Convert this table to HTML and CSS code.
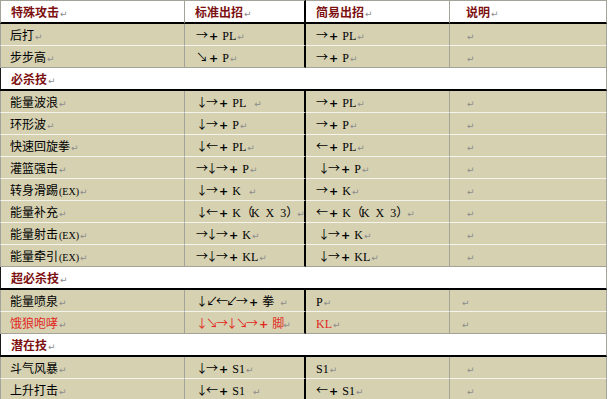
FILE: index.html
```html
<!DOCTYPE html>
<html lang="zh-CN">
<head>
<meta charset="utf-8">
<title>招式表</title>
<link rel="stylesheet" href="styles.css">
</head>
<body>
<table class="moves">
  <colgroup>
    <col class="w1"><col class="w2"><col class="w3"><col class="w4">
  </colgroup>
  <thead>
    <tr class="head">
      <th class="c1">特殊攻击<span class="pm">↵</span></th>
      <th class="c2">标准出招<span class="pm">↵</span></th>
      <th class="c3">简易出招<span class="pm">↵</span></th>
      <th class="c4">说明<span class="pm">↵</span></th>
    </tr>
  </thead>
  <tbody>
    <tr>
      <td class="c1">后打<span class="pm">↵</span></td>
      <td class="c2 mv">→<b>+</b><span class="lat">PL</span><span class="pm">↵</span></td>
      <td class="c3 mv">→<b>+</b><span class="lat">PL</span><span class="pm">↵</span></td>
      <td class="c4"><span class="pm">↵</span></td>
    </tr>
    <tr class="pre">
      <td class="c1">步步高<span class="pm">↵</span></td>
      <td class="c2 mv">↘<b>+</b><span class="lat">P</span><span class="pm">↵</span></td>
      <td class="c3 mv">→<b>+</b><span class="lat">P</span><span class="pm">↵</span></td>
      <td class="c4"><span class="pm">↵</span></td>
    </tr>
    <tr class="section">
      <td colspan="4">必杀技<span class="pm">↵</span></td>
    </tr>
    <tr>
      <td class="c1">能量波浪<span class="pm">↵</span></td>
      <td class="c2 mv">↓→<b>+</b><span class="lat">PL</span><span class="gap"></span><span class="pm">↵</span></td>
      <td class="c3 mv">→<b>+</b><span class="lat">PL</span><span class="pm">↵</span></td>
      <td class="c4"><span class="pm">↵</span></td>
    </tr>
    <tr>
      <td class="c1">环形波<span class="pm">↵</span></td>
      <td class="c2 mv">↓→<b>+</b><span class="lat">P</span><span class="pm">↵</span></td>
      <td class="c3 mv">→<b>+</b><span class="lat">P</span><span class="pm">↵</span></td>
      <td class="c4"><span class="pm">↵</span></td>
    </tr>
    <tr>
      <td class="c1">快速回旋拳<span class="pm">↵</span></td>
      <td class="c2 mv">↓←<b>+</b><span class="lat">PL</span><span class="pm">↵</span></td>
      <td class="c3 mv">←<b>+</b><span class="lat">PL</span><span class="pm">↵</span></td>
      <td class="c4"><span class="pm">↵</span></td>
    </tr>
    <tr>
      <td class="c1">灌篮强击<span class="pm">↵</span></td>
      <td class="c2 mv">→↓→<b>+</b><span class="lat">P</span><span class="pm">↵</span></td>
      <td class="c3 mv in">↓→<b>+</b><span class="lat">P</span><span class="pm">↵</span></td>
      <td class="c4"><span class="pm">↵</span></td>
    </tr>
    <tr>
      <td class="c1">转身滑踢<span class="ex">(EX)</span><span class="pm">↵</span></td>
      <td class="c2 mv">↓→<b>+</b><span class="lat">K</span><span class="gap"></span><span class="pm">↵</span></td>
      <td class="c3 mv">→<b>+</b><span class="lat">K</span><span class="pm">↵</span></td>
      <td class="c4"><span class="pm">↵</span></td>
    </tr>
    <tr>
      <td class="c1">能量补充<span class="pm">↵</span></td>
      <td class="c2 mv">↓←<b>+</b><span class="lat">K</span>（<span class="lat wide">K X 3</span>）<span class="pm">↵</span></td>
      <td class="c3 mv">←<b>+</b><span class="lat">K</span>（<span class="lat wide">K X 3</span>）<span class="pm">↵</span></td>
      <td class="c4"><span class="pm">↵</span></td>
    </tr>
    <tr>
      <td class="c1">能量射击<span class="ex">(EX)</span><span class="pm">↵</span></td>
      <td class="c2 mv">→↓→<b>+</b><span class="lat">K</span><span class="pm">↵</span></td>
      <td class="c3 mv in">↓→<b>+</b><span class="lat">K</span><span class="pm">↵</span></td>
      <td class="c4"><span class="pm">↵</span></td>
    </tr>
    <tr class="pre">
      <td class="c1">能量牵引<span class="ex">(EX)</span><span class="pm">↵</span></td>
      <td class="c2 mv">→↓→<b>+</b><span class="lat">KL</span><span class="pm">↵</span></td>
      <td class="c3 mv in">↓→<b>+</b><span class="lat">KL</span><span class="pm">↵</span></td>
      <td class="c4"><span class="pm">↵</span></td>
    </tr>
    <tr class="section">
      <td colspan="4">超必杀技<span class="pm">↵</span></td>
    </tr>
    <tr>
      <td class="c1">能量喷泉<span class="pm">↵</span></td>
      <td class="c2 mv">↓↙←↙→<b>+</b>拳<span class="gap"></span><span class="pm">↵</span></td>
      <td class="c3 mv"><span class="lat">P</span><span class="pm">↵</span></td>
      <td class="c4 out"><span class="pm">↵</span></td>
    </tr>
    <tr class="pre red">
      <td class="c1">饿狼咆哮<span class="pm">↵</span></td>
      <td class="c2 mv">↓↘→↓↘→<b>+</b>脚<span class="pm">↵</span></td>
      <td class="c3 mv"><span class="lat">KL</span><span class="pm">↵</span></td>
      <td class="c4 out"><span class="pm">↵</span></td>
    </tr>
    <tr class="section">
      <td colspan="4">潜在技<span class="pm">↵</span></td>
    </tr>
    <tr>
      <td class="c1">斗气风暴<span class="pm">↵</span></td>
      <td class="c2 mv">↓→<b>+</b><span class="lat">S1</span><span class="pm">↵</span></td>
      <td class="c3 mv"><span class="lat">S1</span><span class="pm">↵</span></td>
      <td class="c4"><span class="pm">↵</span></td>
    </tr>
    <tr>
      <td class="c1">上升打击<span class="pm">↵</span></td>
      <td class="c2 mv">↓←<b>+</b><span class="lat">S1</span><span class="gap"></span><span class="pm">↵</span></td>
      <td class="c3 mv">←<b>+</b><span class="lat">S1</span><span class="pm">↵</span></td>
      <td class="c4"><span class="pm">↵</span></td>
    </tr>
  </tbody>
</table>
</body>
</html>
```

FILE: styles.css
```css
html, body {
  margin: 0;
  padding: 0;
  background: #ffffff;
}

.moves {
  border-collapse: separate;
  border-spacing: 0;
  table-layout: fixed;
  width: 607px;
  font-family: "Noto Sans CJK SC", sans-serif;
  font-size: 12px;
  line-height: 20px;
  color: #000000;
}

.w1 { width: 185px; }
.w2 { width: 121px; }
.w3 { width: 144px; }
.w4 { width: 157px; }

.moves th,
.moves td {
  box-sizing: border-box;
  height: 22px;
  padding: 0 0 0 10px;
  text-align: left;
  vertical-align: middle;
  white-space: nowrap;
  overflow: hidden;
  background: #d5d1b1;
  border-right: 1px solid #a3a39a;
  border-bottom: 1px solid #f4f4ec;
}

.moves .c1 {
  border-left: 1px solid #a3a39a;
  padding-left: 9px;
}

.moves .c2 {
  border-right: 2px solid #000000;
  padding-left: 11px;
}

.moves .c3 {
  padding-left: 10px;
}

.moves .c3.in {
  padding-left: 12px;
}

.moves .c4 {
  padding-left: 16px;
}

.moves .c4.out {
  padding-left: 11px;
}

/* move strings: arrows set a little tighter */
.moves .mv {
  letter-spacing: -2px;
}

.moves tr.pre td {
  border-bottom-color: #a3a39a;
}

/* header row */
.moves .head th {
  height: 24px;
  background: #ffffff;
  border-top: 1px solid #a3a39a;
  border-bottom: 2px solid #000000;
  color: #7d1010;
  font-weight: bold;
}
.moves .head th.c1 { padding-left: 10px; }
.moves .head th.c2 { padding-left: 10px; }
.moves .head th.c4 { padding-left: 16px; }

/* section rows */
.moves tr.section td {
  height: 23px;
  background: #ffffff;
  border-left: 1px solid #1a1a1a;
  border-right: 1px solid #a3a39a;
  border-bottom: 2px solid #000000;
  padding-left: 10px;
  color: #7d1010;
  font-weight: bold;
}

.moves tr.red .c1,
.moves tr.red .c2,
.moves tr.red .c3 {
  color: #e2281c;
}

.moves b {
  font-family: "DejaVu Sans", sans-serif;
  font-weight: bold;
  font-size: 11px;
  line-height: 10px;
  letter-spacing: 0;
  margin: 0 4px 0 3px;
}

.lat {
  font-family: "Liberation Serif", serif;
  font-size: 12px;
  line-height: 10px;
  letter-spacing: 0;
}

.lat.wide {
  letter-spacing: 0;
  word-spacing: 3px;
}

.ex {
  font-family: "Liberation Serif", serif;
  font-size: 10px;
  line-height: 10px;
  margin-left: 1px;
}

.gap {
  display: inline-block;
  width: 7px;
}

.pm {
  font-family: "DejaVu Sans", sans-serif;
  font-size: 9px;
  line-height: 10px;
  font-weight: normal;
  letter-spacing: 0;
  color: #8c8c8c;
  margin-left: 1px;
}
```
